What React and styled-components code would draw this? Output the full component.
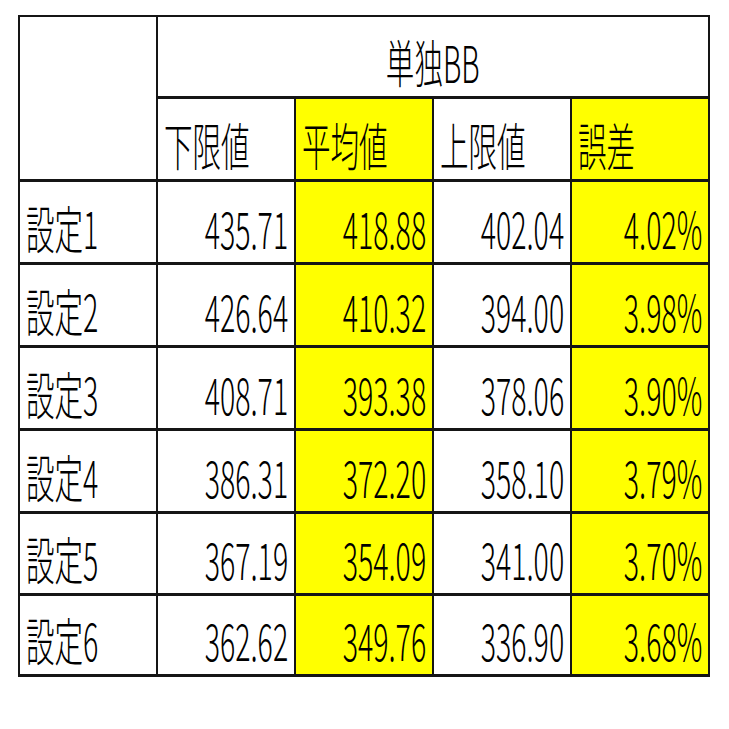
import styled, { createGlobalStyle } from "styled-components";

const GlobalStyle = createGlobalStyle`
    html, body {
        margin: 0;
        padding: 0;
        background: #ffffff;
    }
    body {
        font-family: "Noto Sans CJK JP", "Noto Sans", sans-serif;
        color: #000000;
    }
`;

const columns = ["下限値", "平均値", "上限値", "誤差"];

const rows = [
    { label: "設定1", values: ["435.71", "418.88", "402.04", "4.02%"] },
    { label: "設定2", values: ["426.64", "410.32", "394.00", "3.98%"] },
    { label: "設定3", values: ["408.71", "393.38", "378.06", "3.90%"] },
    { label: "設定4", values: ["386.31", "372.20", "358.10", "3.79%"] },
    { label: "設定5", values: ["367.19", "354.09", "341.00", "3.70%"] },
    { label: "設定6", values: ["362.62", "349.76", "336.90", "3.68%"] },
];

// 平均値 と 誤差 の列は黄色
const isYellow = (i) => i === 1 || i === 3;

export default function App() {
    return (
        <>
            <GlobalStyle />
            <StyledPage>
                <StyledSheet>
                    <StyledCorner />
                    <StyledCell $span={4} $align="center">
                        <StyledText $align="center">単独BB</StyledText>
                    </StyledCell>
                    {columns.map((name, i) => (
                        <StyledCell key={name} $yellow={isYellow(i)}>
                            <StyledText>{name}</StyledText>
                        </StyledCell>
                    ))}
                    {rows.map((row) => (
                        <Row key={row.label} row={row} />
                    ))}
                </StyledSheet>
            </StyledPage>
        </>
    );
}

function Row({ row }) {
    return (
        <>
            <StyledCell>
                <StyledText>{row.label}</StyledText>
            </StyledCell>
            {row.values.map((value, i) => (
                <StyledCell key={i} $yellow={isYellow(i)} $align="right">
                    <StyledText $align="right">{value}</StyledText>
                </StyledCell>
            ))}
        </>
    );
}

const StyledPage = styled.div`
    padding: 15px 0 0 18px;
`;

const StyledSheet = styled.div`
    display: inline-grid;
    grid-template-columns: repeat(5, 136px);
    grid-template-rows: 79px 80px repeat(4, 80px) 79px 78px;
    column-gap: 2px;
    row-gap: 3px;
    padding: 2px 2px 3px 2px;
    background: #151515;
`;

const StyledCorner = styled.div`
    grid-row: span 2;
    background: #ffffff;
`;

const justify = {
    left: "flex-start",
    center: "center",
    right: "flex-end",
};

const StyledCell = styled.div`
    grid-column: span ${(p) => p.$span || 1};
    display: flex;
    align-items: flex-end;
    justify-content: ${(p) => justify[p.$align || "left"]};
    padding: 0 6px 9px 6px;
    background: ${(p) => (p.$yellow ? "#ffff00" : "#ffffff")};
    min-width: 0;
`;

const StyledText = styled.span`
    display: inline-block;
    flex-shrink: 0;
    font-size: 51px;
    font-weight: 300;
    line-height: 1;
    white-space: nowrap;
    transform: scaleX(0.56);
    transform-origin: ${(p) => p.$align || "left"} bottom;
`;
